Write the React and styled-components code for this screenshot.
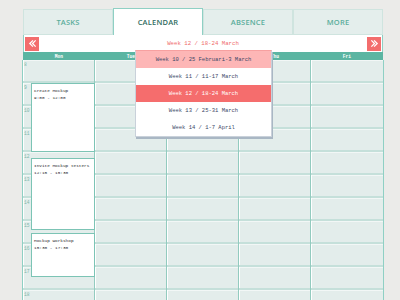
import React from 'react'
import styled, { createGlobalStyle } from 'styled-components'

const GlobalStyle = createGlobalStyle`
  body {
    margin: 0;
    background: #ebebe9;
    overflow: hidden;
  }
`

const Page = styled.div`
  width: 360px;
  padding: 8px 0 0 23px;
  font-family: "Liberation Mono", "DejaVu Sans Mono", monospace;
`

const Tabs = styled.nav`
  display: grid;
  grid-template-columns: repeat(4, 90px);
  height: 27px;
`

const Tab = styled.div`
  display: flex;
  align-items: center;
  justify-content: center;
  box-sizing: border-box;
  font-family: "Open Sans", "Liberation Sans", sans-serif;
  font-size: 7.5px;
  font-weight: 600;
  letter-spacing: 0.2px;
  margin-top: ${p => (p.$active ? '0' : '1px')};
  background: ${p => (p.$active ? '#ffffff' : '#e4eeec')};
  color: ${p => (p.$active ? '#2e6c60' : '#5aad9b')};
  border: 1px solid ${p => (p.$active ? '#8fd0c4' : '#cfe4df')};
  border-bottom: ${p => (p.$active ? 'none' : '1px solid #cfe4df')};
`

const NavBar = styled.div`
  position: relative;
  height: 17px;
  box-sizing: border-box;
  background: #ffffff;
  border-left: 1px solid #8fd0c4;
  border-right: 1px solid #8fd0c4;
  display: flex;
  align-items: center;
  justify-content: space-between;
  padding: 0 1px 0 1px;
`

const Arrow = styled.button`
  width: 14px;
  height: 14px;
  padding: 0;
  border: none;
  background: #f36d6d;
  display: flex;
  align-items: center;
  justify-content: center;
`

const Current = styled.span`
  font-size: 5.7px;
  color: #ef6a6a;
`

const Dropdown = styled.ul`
  position: absolute;
  left: 111px;
  top: 15px;
  width: 135px;
  margin: 0;
  padding: 0;
  list-style: none;
  background: #ffffff;
  border: 1px solid #c9d1da;
  border-top: 1px solid #f7a0a0;
  box-shadow: 1px 2px 0 #a9b7c4;
  z-index: 3;
`

const Option = styled.li`
  height: 17px;
  display: flex;
  align-items: center;
  justify-content: center;
  font-size: 5.5px;
  color: ${p => (p.$tone === 'active' ? '#ffffff' : '#3a4766')};
  background: ${p =>
    p.$tone === 'active' ? '#f56d6d' : p.$tone === 'hover' ? '#fdb6b6' : '#ffffff'};
`

const DayHeader = styled.div`
  display: grid;
  grid-template-columns: repeat(5, 72px);
  height: 8px;
  background: #5bb5a2;
`

const DayName = styled.div`
  font-size: 4.6px;
  font-weight: bold;
  color: #ffffff;
  display: flex;
  align-items: center;
  justify-content: center;
`

const Body = styled.div`
  display: grid;
  grid-template-columns: repeat(5, 72px);
  border-right: 1px solid #8fd0c4;
  margin-right: -1px;
`

const Column = styled.div`
  position: relative;
  display: flex;
  flex-direction: column;
  border-left: 1px solid ${p => (p.$first ? '#8fd0c4' : '#93cbbf')};
  margin-left: -1px;
`

const Cell = styled.div`
  position: relative;
  height: 23px;
  flex: none;
  box-sizing: border-box;
  background: #e3edeb;
  border-bottom: 2px solid #c5e0da;
  box-shadow: inset 1px 0 0 #ffffff, inset 0 1px 0 #f2f7f6;
`

const Hour = styled.span`
  position: absolute;
  left: 1px;
  top: 2px;
  font-size: 4.6px;
  color: #7db7aa;
`

const Event = styled.div`
  position: absolute;
  left: 8px;
  right: 0;
  box-sizing: border-box;
  background: #ffffff;
  border: 1px solid #7cc4b5;
  padding: 3px 2px;
  font-size: 4.4px;
  line-height: 7px;
  color: #1f1f2c;
  z-index: 1;
`

const Chevron = ({ dir }) => (
  <svg width="9" height="9" viewBox="0 0 10 10">
    <path
      d={dir === 'left' ? 'M5.5 1.5 L2 5 L5.5 8.5 M8.5 1.5 L5 5 L8.5 8.5' : 'M1.5 1.5 L5 5 L1.5 8.5 M4.5 1.5 L8 5 L4.5 8.5'}
      fill="none"
      stroke="#ffffff"
      strokeWidth="1.4"
    />
  </svg>
)

const days = ['Mon', 'Tue', 'Wed', 'Thu', 'Fri']
const hours = [8, 9, 10, 11, 12, 13, 14, 15, 16, 17, 18]
const weeks = [
  { label: 'Week 10 / 25 Februari-3 March', tone: 'hover' },
  { label: 'Week 11 / 11-17 March' },
  { label: 'Week 12 / 18-24 March', tone: 'active' },
  { label: 'Week 13 / 25-31 March' },
  { label: 'Week 14 / 1-7 April' }
]
const events = [
  { title: 'Create Mockup', time: '9:00 - 12:00', from: 9, to: 12 },
  { title: 'Invite Mockup testers', time: '12:15 - 15:30', from: 12.25, to: 15.4 },
  { title: 'Mockup workshop', time: '15:30 - 17:30', from: 15.5, to: 17.45 }
]

const ROW = 23

const App = () => {
  return (
    <>
      <GlobalStyle />
      <Page>
        <Tabs>
          <Tab>TASKS</Tab>
          <Tab $active>CALENDAR</Tab>
          <Tab>ABSENCE</Tab>
          <Tab>MORE</Tab>
        </Tabs>
        <NavBar>
          <Arrow>
            <Chevron dir="left" />
          </Arrow>
          <Current>Week 12 / 18-24 March</Current>
          <Arrow>
            <Chevron dir="right" />
          </Arrow>
          <Dropdown>
            {weeks.map(w => (
              <Option key={w.label} $tone={w.tone}>
                {w.label}
              </Option>
            ))}
          </Dropdown>
        </NavBar>
        <DayHeader>
          {days.map(d => (
            <DayName key={d}>{d}</DayName>
          ))}
        </DayHeader>
        <Body>
          {days.map((d, i) => (
            <Column key={d} $first={i === 0}>
              {hours.map(h => (
                <Cell key={h}>{i === 0 && <Hour>{h}</Hour>}</Cell>
              ))}
              {i === 0 &&
                events.map(e => (
                  <Event
                    key={e.title}
                    style={{ top: (e.from - 8) * ROW, height: (e.to - e.from) * ROW }}
                  >
                    {e.title}
                    <br />
                    {e.time}
                  </Event>
                ))}
            </Column>
          ))}
        </Body>
      </Page>
    </>
  )
}

export default App
